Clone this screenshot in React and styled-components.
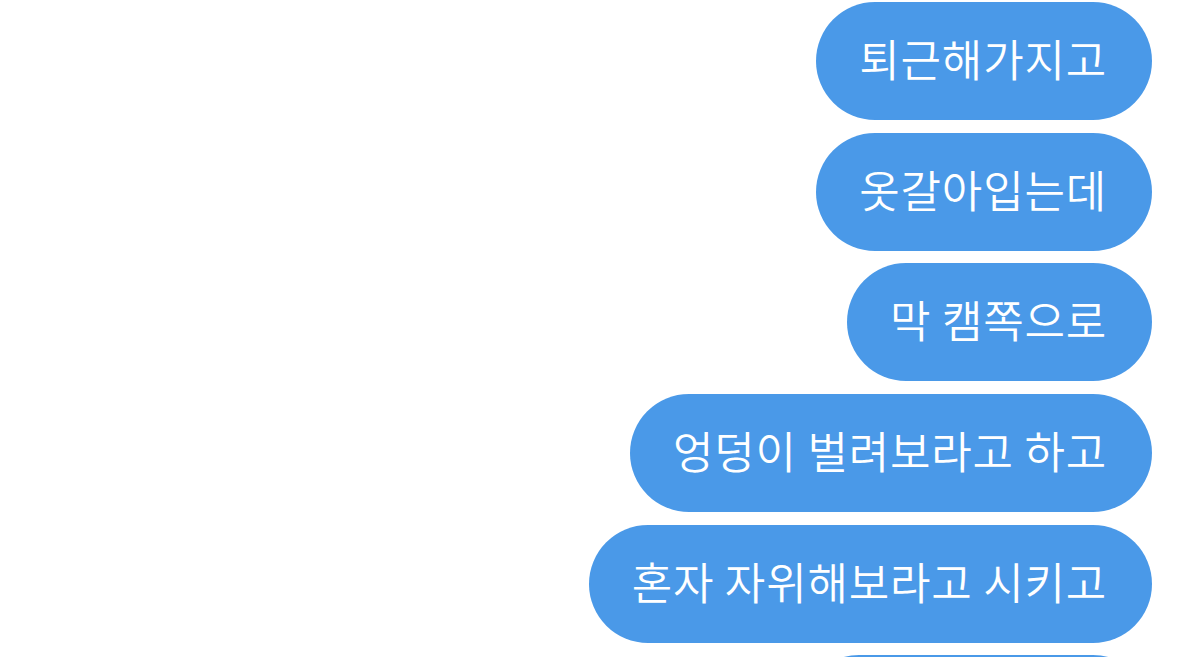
import React from "react";
import styled, { createGlobalStyle } from "styled-components";

const MESSAGES = [
  "퇴근해가지고",
  "옷갈아입는데",
  "막 캠쪽으로",
  "엉덩이 벌려보라고 하고",
  "혼자 자위해보라고 시키고",
  "",
];

const GlobalStyle = createGlobalStyle`
  html, body {
    margin: 0;
    padding: 0;
    background: #ffffff;
    overflow: hidden;
  }
`;

const Thread = styled.div`
  width: 1179px;
  height: 657px;
  box-sizing: border-box;
  padding: 2px 27px 0 0;
  display: flex;
  flex-direction: column;
  align-items: flex-end;
  gap: 12.7px;
  overflow: hidden;
  font-family: "Noto Sans CJK KR", "Noto Sans", sans-serif;
`;

const Bubble = styled.div`
  flex: none;
  height: 118px;
  min-width: ${({ $minWidth }) => $minWidth || 0}px;
  box-sizing: border-box;
  padding: 0 45px 6px 43px;
  border-radius: 59px;
  background: #4a99e8;
  color: #ffffff;
  font-size: 44px;
  font-weight: 350;
  letter-spacing: 0.8px;
  line-height: 1;
  white-space: pre;
  display: flex;
  align-items: center;
  justify-content: flex-end;
`;

export default function App() {
  return (
    <>
      <GlobalStyle />
      <Thread>
        {MESSAGES.map((text, i) => (
          <Bubble key={i} $minWidth={text ? 0 : 352}>
            {text}
          </Bubble>
        ))}
      </Thread>
    </>
  );
}
